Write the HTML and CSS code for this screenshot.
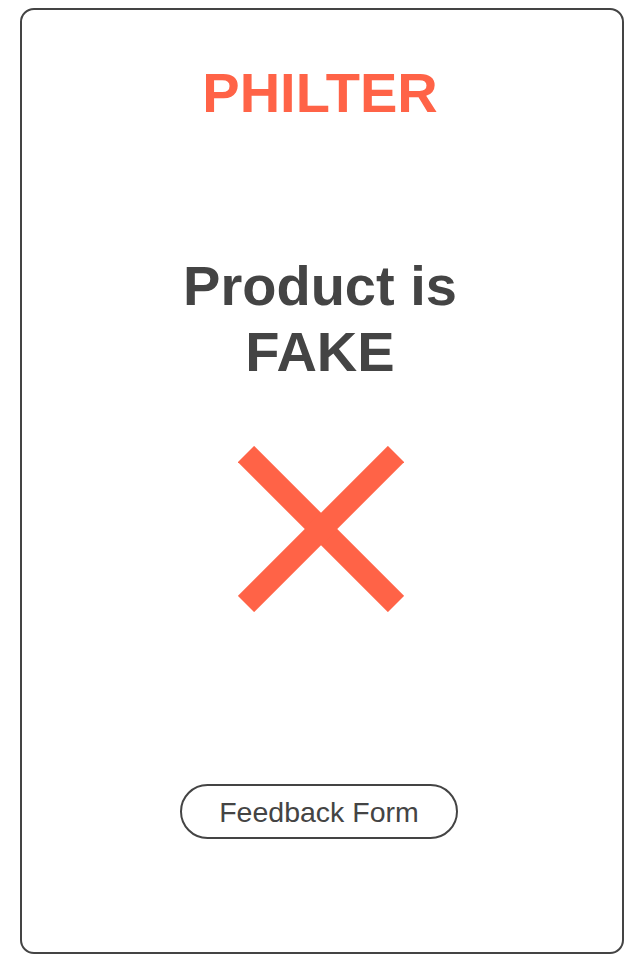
FILE: index.html
```html
<!DOCTYPE html>
<html lang="en">
<head>
<meta charset="utf-8">
<title>Philter</title>
<link rel="stylesheet" href="styles.css">
</head>
<body>
<main class="card">
  <h1 class="brand">PHILTER</h1>
  <h2 class="verdict">Product is<br>FAKE</h2>
  <svg class="cross" width="166" height="166" viewBox="0 0 166 166" aria-hidden="true">
    <line x1="8" y1="8" x2="158" y2="158" />
    <line x1="158" y1="8" x2="8" y2="158" />
  </svg>
  <a class="feedback" href="#">Feedback Form</a>
</main>
</body>
</html>
```
FILE: styles.css
```css
* { box-sizing: border-box; }
html, body { margin: 0; padding: 0; background: #fff; }
body {
  font-family: "Liberation Sans", Arial, sans-serif;
  color: #444;
}
.card {
  margin: 8px 16px 0 20px;
  width: 604px;
  height: 946px;
  border: 2px solid #444;
  border-radius: 14px;
  padding: 55px 4px 0 0;
  display: flex;
  flex-direction: column;
  align-items: center;
}
.brand {
  margin: 0;
  font-size: 56px;
  line-height: 1;
  font-weight: 700;
  color: #ff6347;
}
.verdict {
  margin: 132px 0 0;
  font-size: 56px;
  line-height: 66px;
  font-weight: 700;
  text-align: center;
  color: #444;
}
.cross {
  margin: 61px 0 0 2px;
  display: block;
}
.cross line {
  stroke: #ff6347;
  stroke-width: 23;
  stroke-linecap: butt;
}
.feedback {
  margin: 172px 2px 0 0;
  width: 278px;
  height: 55px;
  border: 2px solid #444;
  border-radius: 28px;
  padding: 12px 0 0;
  font-size: 28.5px;
  line-height: 1;
  text-align: center;
  color: #444;
  text-decoration: none;
}
```
